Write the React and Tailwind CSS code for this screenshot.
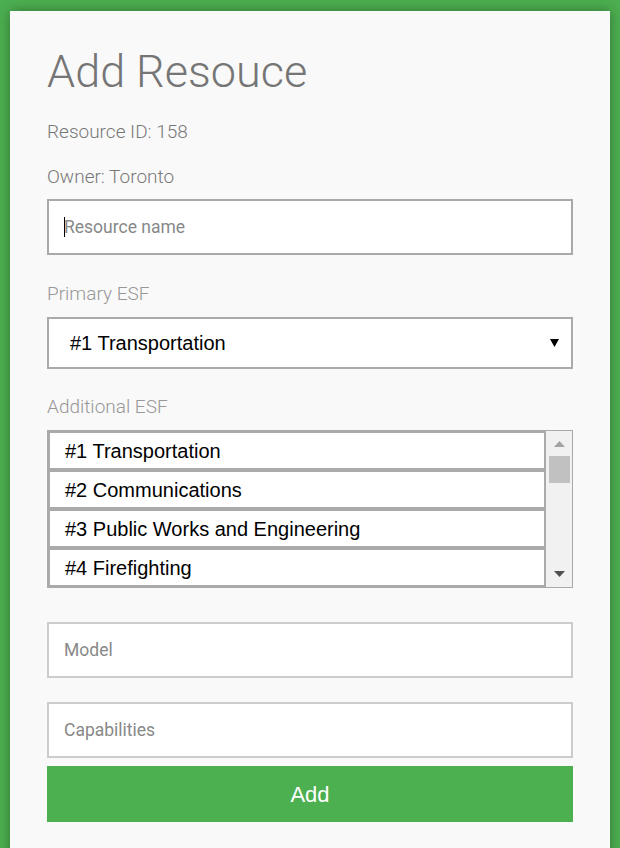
import React from 'react';

const ESF = [
  '#1 Transportation',
  '#2 Communications',
  '#3 Public Works and Engineering',
  '#4 Firefighting',
];

function TextBox({ placeholder, focused }) {
  return (
    <div
      className={
        'h-[56px] bg-white border-2 flex items-center pl-[15px] ' +
        (focused ? 'border-[#a9a9a9]' : 'border-[#cccccc]')
      }
    >
      {focused && <span className="w-px h-[20px] bg-black -mr-px"></span>}
      <span className="text-[17.5px] text-[#888888] font-['Roboto',sans-serif]">{placeholder}</span>
    </div>
  );
}

function Label({ children, light }) {
  return (
    <div
      className={
        'text-[19px] leading-[24px] font-light font-[\'Roboto\',sans-serif] ' +
        (light ? 'text-[#979797]' : 'text-[#787878]')
      }
    >
      {children}
    </div>
  );
}

export default function App() {
  return (
    <div className="h-[848px] overflow-hidden bg-[#4caf50] pt-[11px] px-[10px]">
      <div className="h-[860px] bg-[#f9f9f9] shadow-[0_0_12px_rgba(0,0,0,0.35)] px-[37px] pt-[34px]">
        <h1 className="text-[45px] leading-[54px] font-light text-[#757575] font-['Roboto',sans-serif]">
          Add Resouce
        </h1>

        <div className="mt-[21px]"><Label>Resource ID: 158</Label></div>
        <div className="mt-[21px]"><Label>Owner: Toronto</Label></div>

        <div className="mt-[10px]">
          <TextBox placeholder="Resource name" focused />
        </div>

        <div className="mt-[27px]"><Label light>Primary ESF</Label></div>
        <div className="mt-[11px] h-[52px] bg-white border-2 border-[#aaaaaa] flex items-center justify-between pl-[21px] pr-[12px] font-['Liberation_Sans',Arial,sans-serif] text-[20px] text-black">
          <span>#1 Transportation</span>
          <svg width="9" height="8" viewBox="0 0 9 8">
            <path d="M0 0H9L4.5 8Z" fill="#000" />
          </svg>
        </div>

        <div className="mt-[26px]"><Label light>Additional ESF</Label></div>
        <div className="mt-[11px] h-[158px] border border-[#aaaaaa] flex overflow-hidden">
          <div className="flex-1 flex flex-col">
            {ESF.map(o => (
              <div
                key={o}
                className="h-[39px] shrink-0 bg-white border-2 border-[#aaaaaa] flex items-center pl-[15px] font-['Liberation_Sans',Arial,sans-serif] text-[20px] text-black"
              >
                {o}
              </div>
            ))}
          </div>
          <div className="w-[26px] bg-[#f1f1f1] flex flex-col items-center">
            <svg className="mt-[10px]" width="11" height="6" viewBox="0 0 11 6">
              <path d="M0 6H11L5.5 0Z" fill="#a3a3a3" />
            </svg>
            <div className="mt-[9px] w-[21px] h-[27px] bg-[#c1c1c1]"></div>
            <div className="flex-1"></div>
            <svg className="mb-[10px]" width="11" height="6" viewBox="0 0 11 6">
              <path d="M0 0H11L5.5 6Z" fill="#505050" />
            </svg>
          </div>
        </div>

        <div className="mt-[34px]">
          <TextBox placeholder="Model" />
        </div>
        <div className="mt-[24px]">
          <TextBox placeholder="Capabilities" />
        </div>

        <button className="mt-[8px] w-full h-[56px] bg-[#4caf50] text-white text-[22px] font-['Liberation_Sans',Arial,sans-serif]">
          Add
        </button>
      </div>
    </div>
  );
}
